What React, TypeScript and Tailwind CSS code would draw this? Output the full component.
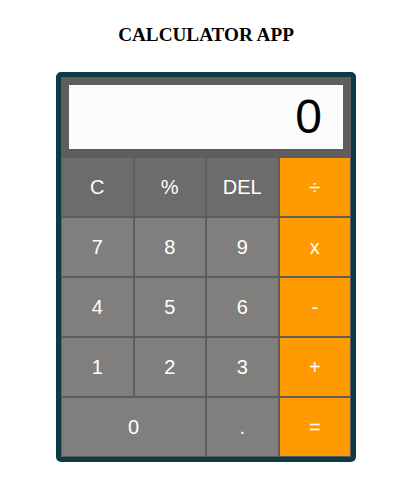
import React from "react";

type Btn = { label: string; kind: "fn" | "num" | "op"; wide?: boolean };

const buttons: Btn[] = [
  { label: "C", kind: "fn" },
  { label: "%", kind: "fn" },
  { label: "DEL", kind: "fn" },
  { label: "÷", kind: "op" },
  { label: "7", kind: "num" },
  { label: "8", kind: "num" },
  { label: "9", kind: "num" },
  { label: "x", kind: "op" },
  { label: "4", kind: "num" },
  { label: "5", kind: "num" },
  { label: "6", kind: "num" },
  { label: "-", kind: "op" },
  { label: "1", kind: "num" },
  { label: "2", kind: "num" },
  { label: "3", kind: "num" },
  { label: "+", kind: "op" },
  { label: "0", kind: "num", wide: true },
  { label: ".", kind: "num" },
  { label: "=", kind: "op" },
];

const kindClass = {
  fn: "bg-[#6c6c6c]",
  num: "bg-[#807f7d]",
  op: "bg-[#ff9a00]",
};

export default function App() {
  return (
    <div className="w-[412px] flex flex-col items-center bg-white">
      <h3 className="pt-[24px] text-[19.2px] leading-[21px] font-bold text-black font-['Liberation_Serif',serif]">
        CALCULATOR APP
      </h3>

      <div className="mt-[27px] w-[300px] rounded-[5px] border-[5px] border-[#0d3b45] bg-[#5f5d5d] font-['Liberation_Sans',Arial,sans-serif]">
        <div className="p-[8px]">
          <div className="h-[64px] bg-[#fcfcfc] flex items-center justify-end pr-[21px] text-[48px] text-black">
            0
          </div>
        </div>

        <div className="grid grid-cols-4">
          {buttons.map((b) => (
            <button
              key={b.label}
              className={`h-[60px] border border-[#5f5d5d] flex items-center justify-center text-[20px] text-white ${kindClass[b.kind]} ${b.wide ? "col-span-2" : ""}`}
            >
              {b.label}
            </button>
          ))}
        </div>
      </div>
    </div>
  );
}
